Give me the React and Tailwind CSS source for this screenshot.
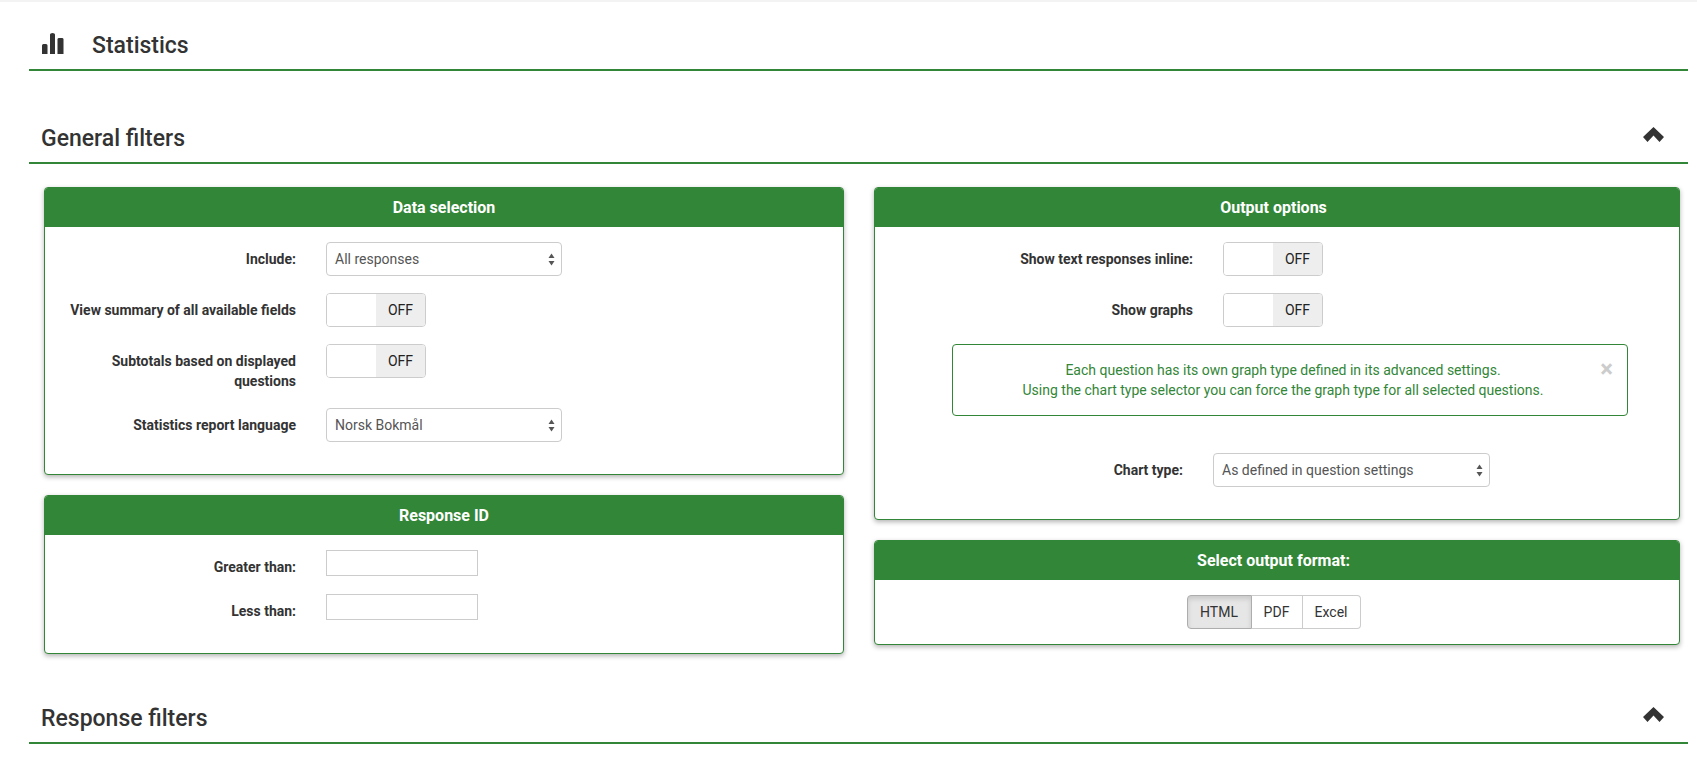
const G = "border-[#328637]";

function Panel({ title, children, titleClass = "" }) {
  return (
    <section className={`rounded-[4px] border ${G} bg-white shadow-[0_2px_5px_rgba(0,0,0,0.3)]`}>
      <div className={`flex h-[39px] items-center justify-center rounded-t-[3px] bg-[#328637] text-[16px] font-bold text-white ${titleClass}`}>{title}</div>
      {children}
    </section>
  );
}

function Label({ children, className = "w-[236px]" }) {
  return <label className={`pt-[7px] text-right text-[14px] leading-[20px] font-bold text-[#333] ${className}`}>{children}</label>;
}

function Toggle() {
  return (
    <div className="flex h-[34px] w-[100px] overflow-hidden rounded-[4px] border border-[#ccc] text-[14px] text-[#222]">
      <div className="flex-1 bg-white" />
      <div className="flex w-[49px] items-center justify-center bg-[#eee]">OFF</div>
    </div>
  );
}

function Select({ value, className }) {
  return (
    <div className={`flex h-[34px] items-center justify-between rounded-[4px] border border-[#ccc] bg-white pr-[6px] pl-[8px] text-[14px] text-[#555] ${className}`}>
      <span>{value}</span>
      <svg width="7" height="13" viewBox="0 0 7 13" fill="#555">
        <path d="M3.5 0.5 L6.5 5 L0.5 5 Z" />
        <path d="M3.5 12.5 L0.5 8 L6.5 8 Z" />
      </svg>
    </div>
  );
}

function Chevron() {
  return (
    <svg width="21" height="16" viewBox="0 0 21 16" fill="#333" className="mb-[6px]">
      <path d="M10.5 0 L21 10 L16.5 15 L10.5 8.5 L4.5 15 L0 10 Z" />
    </svg>
  );
}

function Heading({ title, className }) {
  return (
    <div className={`flex h-[48px] items-center justify-between pr-[24px] pl-[12px] ${className}`}>
      <h2 className="mt-[2px] text-[23px] font-medium text-[#333]">{title}</h2>
      <Chevron />
    </div>
  );
}

function Row({ children, className = "" }) {
  return <div className={`flex gap-[30px] ${className}`}>{children}</div>;
}

export default function App() {
  return (
    <div className="min-h-[768px] bg-white font-['Roboto',sans-serif]">
      <div className="h-[2px] bg-[#f3f3f3]" />
      <main className="pr-[9px] pl-[29px]">
        <div className="mt-[18px] flex h-[49px] items-center gap-[28px] pl-[13px]">
          <svg width="22" height="21" viewBox="0 0 22 21" fill="#333" className="mb-[2px]">
            <path d="M0 12.5 a1.5 1.5 0 0 1 1.5 -1.5 h2.5 a1.5 1.5 0 0 1 1.5 1.5 V21 H0 Z" />
            <path d="M8 1.5 a2.5 1.5 0 0 1 5 0 V21 H8 Z" />
            <path d="M15.5 6 a1.5 1.5 0 0 1 1.5 -1 h3 a1.5 1.5 0 0 1 1.5 1 V21 h-6 Z" />
          </svg>
          <h1 className="mt-[4px] text-[23px] font-medium text-[#333]">Statistics</h1>
        </div>
        <div className={`border-b-2 ${G}`} />

        <Heading title="General filters" className="mt-[43px]" />
        <div className={`border-b-2 ${G}`} />

        <div className="mt-[23px] flex gap-[30px] pr-[8px] pl-[15px]">
          <div className="flex w-[800px] flex-col gap-[20px]">
            <Panel title="Data selection">
              <div className="flex flex-col gap-[17px] pt-[15px] pb-[32px] pl-[15px]">
                <Row>
                  <Label>Include:</Label>
                  <Select value="All responses" className="w-[236px]" />
                </Row>
                <Row>
                  <Label>View summary of all available fields</Label>
                  <Toggle />
                </Row>
                <Row>
                  <Label>Subtotals based on displayed questions</Label>
                  <Toggle />
                </Row>
                <Row>
                  <Label>Statistics report language</Label>
                  <Select value="Norsk Bokmål" className="w-[236px]" />
                </Row>
              </div>
            </Panel>
            <Panel title="Response ID">
              <div className="flex flex-col gap-[17px] pt-[15px] pb-[32px] pl-[15px]">
                <Row>
                  <Label>Greater than:</Label>
                  <input className="h-[26px] w-[152px] border border-[#ccc] bg-white" />
                </Row>
                <Row>
                  <Label>Less than:</Label>
                  <input className="h-[26px] w-[152px] border border-[#ccc] bg-white" />
                </Row>
              </div>
            </Panel>
          </div>

          <div className="flex flex-1 flex-col gap-[20px] self-start">
            <Panel title="Output options" titleClass="pr-[7px]">
              <div className="flex flex-col pt-[15px] pb-[32px]">
                <div className="flex flex-col gap-[17px]">
                  <Row className="pl-[15px]">
                    <Label className="w-[303px]">Show text responses inline:</Label>
                    <Toggle />
                  </Row>
                  <Row className="pl-[15px]">
                    <Label className="w-[303px]">Show graphs</Label>
                    <Toggle />
                  </Row>
                </div>
                <div className={`relative mt-[17px] mr-[51px] ml-[77px] rounded-[4px] border ${G} py-[15px] pr-[29px] pl-[15px] text-center text-[14px] leading-[20px] text-[#328637]`}>
                  <p>Each question has its own graph type defined in its advanced settings.</p>
                  <p>Using the chart type selector you can force the graph type for all selected questions.</p>
                  <span className="absolute top-[12px] right-[14px] text-[24px] leading-[24px] font-bold text-[#ccc]">×</span>
                </div>
                <Row className="mt-[37px] pl-[15px]">
                  <Label className="w-[293px]">Chart type:</Label>
                  <Select value="As defined in question settings" className="w-[277px]" />
                </Row>
              </div>
            </Panel>
            <Panel title="Select output format:" titleClass="pr-[7px]">
              <div className="flex justify-center pt-[15px] pr-[7px] pb-[15px]">
                <div className="flex h-[34px] text-[14px] text-[#333]">
                  <div className="flex w-[65px] items-center justify-center rounded-l-[4px] border border-[#adadad] bg-[#e6e6e6] shadow-[inset_0_3px_5px_rgba(0,0,0,0.125)]">HTML</div>
                  <div className="flex w-[51px] items-center justify-center border-y border-r border-[#ccc] bg-white">PDF</div>
                  <div className="flex w-[58px] items-center justify-center rounded-r-[4px] border-y border-r border-[#ccc] bg-white">Excel</div>
                </div>
              </div>
            </Panel>
          </div>
        </div>

        <Heading title="Response filters" className="mt-[40px]" />
        <div className={`border-b-2 ${G}`} />
      </main>
    </div>
  );
}
